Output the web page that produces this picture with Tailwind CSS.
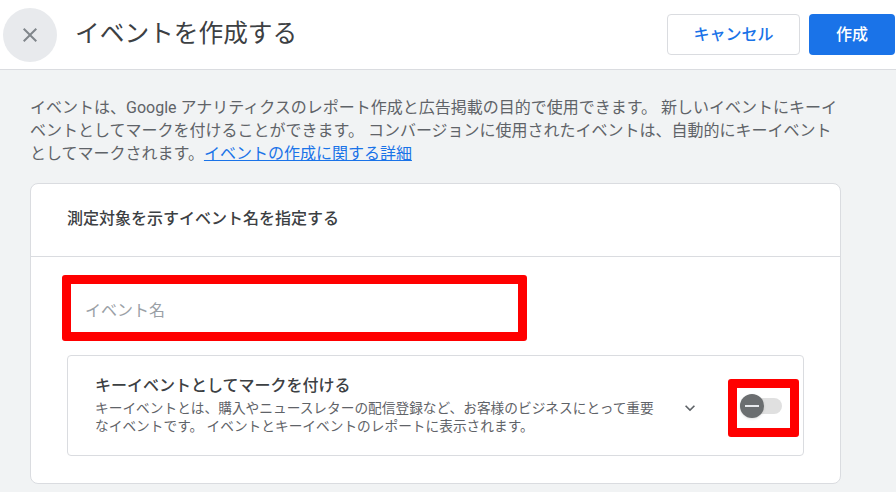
<!DOCTYPE html>
<html lang="ja">

<head>
    <meta charset="UTF-8">
    <title>イベントを作成する</title>
    <script src="https://cdn.jsdelivr.net/npm/@tailwindcss/browser@4"></script>
</head>

<body class="w-[896px] h-[492px] overflow-hidden bg-[#f1f3f4] font-['Roboto','Noto_Sans_CJK_JP',sans-serif] text-[#3c4043]">

    <!-- Header -->
    <header class="h-[70px] bg-white border-b border-[#dadce0] flex items-center pl-[3px] pr-[1px]">
        <button class="w-[54px] h-[54px] rounded-full bg-[#e8eaed] flex items-center justify-center">
            <svg width="24" height="24" viewBox="0 0 24 24" fill="#80868b">
                <path d="M19 6.41 17.59 5 12 10.59 6.41 5 5 6.41 10.59 12 5 17.59 6.41 19 12 13.41 17.59 19 19 17.59 13.41 12z" />
            </svg>
        </button>
        <h1 class="ml-[18px] mb-[2px] text-[24.7px] text-[#3c4043]">イベントを作成する</h1>
        <div class="ml-auto flex gap-[9px]">
            <button class="w-[133px] h-[41px] rounded-[4px] bg-white border border-[#dadce0] text-[16px] font-medium text-[#1a73e8]">キャンセル</button>
            <button class="w-[86px] h-[41px] rounded-[4px] bg-[#1a73e8] text-[16px] font-medium text-white">作成</button>
        </div>
    </header>

    <main class="px-[30px] pt-[26px]">
        <p class="text-[16px] leading-[23px] text-[#5f6368] w-[810px]">イベントは、Google アナリティクスのレポート作成と広告掲載の目的で使用できます。 新しいイベントにキーイベントとしてマークを付けることができます。 コンバージョンに使用されたイベントは、自動的にキーイベントとしてマークされます。<a href="#" class="text-[#1a73e8] underline">イベントの作成に関する詳細</a></p>

        <!-- Card -->
        <section class="mt-[18px] w-[811px] h-[301px] bg-white border border-[#dadce0] rounded-[8px]">
            <div class="h-[72px] box-content border-b border-[#dadce0] flex items-center pl-[36px]">
                <h2 class="mb-[3px] text-[16px] font-medium text-[#3c4043]">測定対象を示すイベント名を指定する</h2>
            </div>

            <div class="pl-[36px] pt-[18px]">
                <!-- Event name input, red annotation on top -->
                <div class="relative w-[737px] h-[66px]">
                    <input type="text" placeholder="イベント名" class="w-full h-full pl-[18px] pt-[4px] text-[16px] outline-none placeholder:text-[#9aa0a6]">
                    <div class="absolute left-[-5px] top-0 w-[465px] h-[66px] border-[9px] border-[#ff0000] rounded-[3px]"></div>
                </div>

                <!-- Key event row -->
                <div class="relative mt-[14px] w-[737px] h-[101px] border border-[#dadce0] rounded-[4px] flex items-center pl-[27px]">
                    <div class="w-[570px]">
                        <h3 class="text-[16px] leading-[20px] mb-[3px] font-medium text-[#3c4043]">キーイベントとしてマークを付ける</h3>
                        <p class="text-[13.7px] leading-[18px] text-[#5f6368]">キーイベントとは、購入やニュースレターの配信登録など、お客様のビジネスにとって重要なイベントです。 イベントとキーイベントのレポートに表示されます。</p>
                    </div>
                    <svg class="ml-[15px] mt-[4px]" width="20" height="20" viewBox="0 0 24 24" fill="#5f6368">
                        <path d="M7.41 8.59 12 13.17l4.59-4.58L18 10l-6 6-6-6z" />
                    </svg>
                    <!-- Toggle -->
                    <div class="relative ml-[40px] w-[42px] h-[16px] rounded-full bg-[#e0e0e0]">
                        <div class="absolute left-0 top-[-4px] w-[24px] h-[24px] rounded-full bg-[#6b6e70] shadow flex items-center justify-center">
                            <div class="w-[14px] h-[2px] bg-[#e8eaed]"></div>
                        </div>
                    </div>
                    <div class="absolute left-[660px] top-[23px] w-[71px] h-[58px] border-[9px] border-[#ff0000] rounded-[3px]"></div>
                </div>
            </div>
        </section>
    </main>

</body>

</html>
